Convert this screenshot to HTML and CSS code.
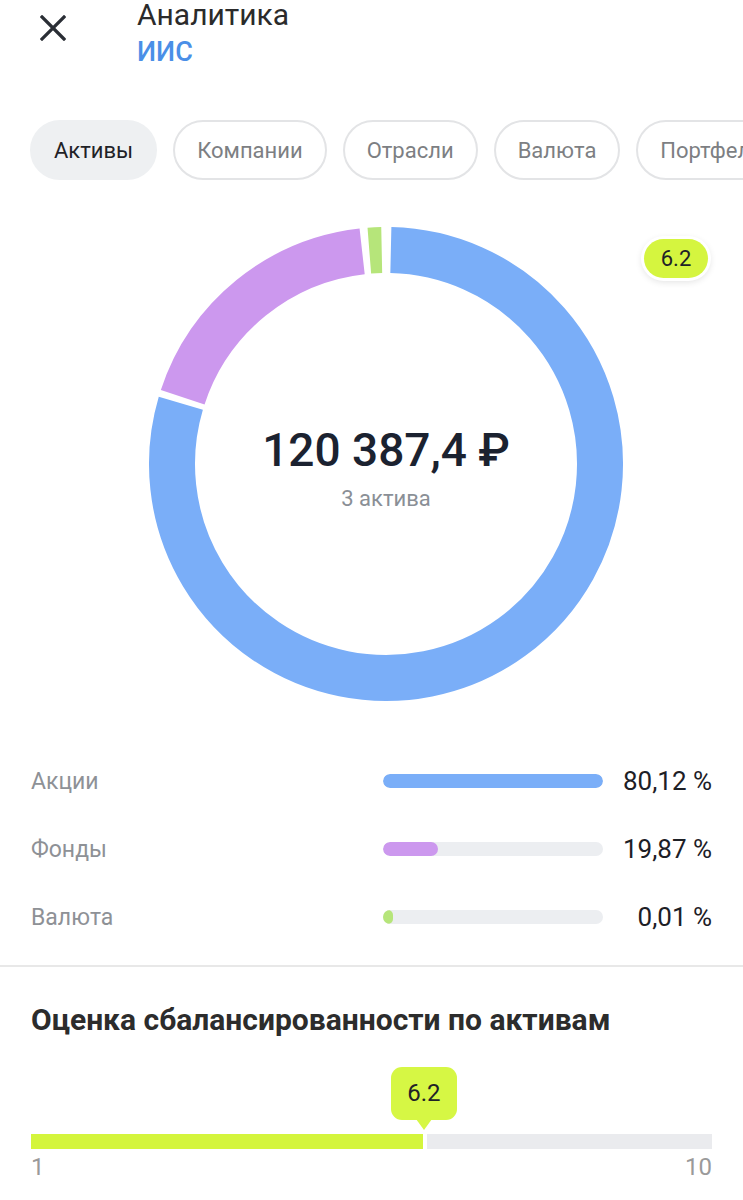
FILE: index.html
```html
<!DOCTYPE html>
<html lang="ru">

<head>
    <meta charset="UTF-8">
    <meta name="viewport" content="width=device-width, initial-scale=1.0">
    <title>Аналитика</title>
    <link rel="stylesheet" href="styles.css">
</head>
<body>
    <div class="screen">
        <header class="top">
            <button class="close" aria-label="Закрыть">
                <svg width="26" height="26" viewBox="0 0 26 26">
                    <path d="M2 2 L24 24 M24 2 L2 24" stroke="#2a2e35" stroke-width="3.2" stroke-linecap="square" fill="none"/>
                </svg>
            </button>
            <div class="title-block">
                <div class="title">Аналитика</div>
                <div class="subtitle">ИИС</div>
            </div>
        </header>

        <nav class="tabs">
            <span class="chip active">Активы</span>
            <span class="chip">Компании</span>
            <span class="chip">Отрасли</span>
            <span class="chip">Валюта</span>
            <span class="chip">Портфели</span>
        </nav>

        <section class="chart">
            <div class="donut">
                <svg width="480" height="480" viewBox="0 0 480 480">
                    <!-- Акции 80,12 % -->
                    <path d="M 244.86 26.06 A 214 214 0 1 1 34.82 179.22" stroke="#7aaef8" stroke-width="46" fill="none"/>
                    <!-- Фонды 19,87 % -->
                    <path d="M 36.7 173.2 A 214 214 0 0 1 216.14 27.33" stroke="#cc98ee" stroke-width="46" fill="none"/>
                    <!-- Валюта 0,01 % -->
                    <path d="M 223.32 26.65 A 214 214 0 0 1 235.71 26.04" stroke="#b6e57a" stroke-width="46" fill="none"/>
                </svg>
                <div class="donut-center">
                    <div class="amount">120 387,4 ₽</div>
                    <div class="count">3 актива</div>
                </div>
            </div>
            <span class="score-badge">6.2</span>
        </section>

        <ul class="legend">
            <li class="row">
                <span class="label">Акции</span>
                <span class="bar"><span class="fill blue" style="width: 100%"></span></span>
                <span class="value">80,12 %</span>
            </li>
            <li class="row">
                <span class="label">Фонды</span>
                <span class="bar"><span class="fill purple" style="width: 24.8%"></span></span>
                <span class="value">19,87 %</span>
            </li>
            <li class="row">
                <span class="label">Валюта</span>
                <span class="bar"><span class="fill green" style="width: 4.5%"></span></span>
                <span class="value">0,01 %</span>
            </li>
        </ul>

        <div class="divider"></div>

        <section class="balance">
            <h2>Оценка сбалансированности по активам</h2>
            <div class="scale">
                <div class="scale-tip" style="left: 57.7%">6.2</div>
                <div class="scale-bar">
                    <div class="scale-fill" style="flex-basis: 57.5%"></div>
                    <div class="scale-rest"></div>
                </div>
                <div class="scale-labels">
                    <span>1</span>
                    <span>10</span>
                </div>
            </div>
        </section>
    </div>
</body>

</html>
```

FILE: styles.css
```css
body {
    margin: 0;
    font-family: Roboto, "Noto Sans", Arial, sans-serif;
    background-color: #fff;
    color: #1d2026;
}

.screen {
    width: 743px;
    height: 1200px;
    overflow: hidden;
}

/* header */
.top {
    display: flex;
    align-items: flex-start;
}

.close {
    margin: 15px 71px 0 40px;
    padding: 0;
    width: 26px;
    height: 26px;
    border: none;
    background: none;
    display: block;
}

.close svg {
    display: block;
}

.title {
    font-size: 30px;
    line-height: 30px;
    color: #2b2b2b;
}

.subtitle {
    font-size: 27px;
    line-height: 44px;
    font-weight: 500;
    color: #4a8fe7;
}

/* chips */
.tabs {
    display: flex;
    gap: 16px;
    margin-top: 46px;
    padding-left: 30px;
    overflow: hidden;
    white-space: nowrap;
}

.chip {
    flex: none;
    box-sizing: border-box;
    height: 60px;
    display: flex;
    align-items: center;
    padding: 0 22px;
    font-size: 22px;
    color: #7d7f83;
    border: 2px solid #e3e4e6;
    border-radius: 30px;
    background-color: #fff;
}

.chip.active {
    color: #1f2227;
    background-color: #eef0f2;
    border-color: #eef0f2;
}

/* donut */
.chart {
    position: relative;
    padding-top: 44px;
}

.donut {
    position: relative;
    width: 480px;
    height: 480px;
    margin-left: 146px;
}

.donut svg {
    display: block;
}

.donut-center {
    position: absolute;
    inset: 0;
    display: flex;
    flex-direction: column;
    align-items: center;
    justify-content: center;
    padding-top: 7px;
    box-sizing: border-box;
}

.amount {
    font-size: 46px;
    line-height: 56px;
    font-weight: 500;
    color: #1b2230;
}

.count {
    margin-top: 7px;
    font-size: 22px;
    line-height: 28px;
    color: #8a8f96;
}

.score-badge {
    position: absolute;
    top: 59px;
    left: 644px;
    width: 64px;
    height: 39px;
    line-height: 39px;
    text-align: center;
    font-size: 22px;
    color: #1f2227;
    background-color: #d5f53f;
    border-radius: 20px;
    box-shadow: 0 0 0 3px #fff, 0 2px 7px 2px rgba(0, 0, 0, 0.12);
}

/* legend */
.legend {
    list-style: none;
    margin: 43px 0 0;
    padding: 0 31px;
}

.row {
    height: 68px;
    display: flex;
    align-items: center;
}

.label {
    flex: 1;
    font-size: 23px;
    color: #8e9196;
}

.bar {
    width: 220px;
    height: 14px;
    border-radius: 7px;
    background-color: #eceef1;
    overflow: hidden;
    display: block;
}

.fill {
    display: block;
    height: 100%;
    border-radius: 7px;
}

.fill.blue { background-color: #7aaef8; }
.fill.purple { background-color: #cc98ee; }
.fill.green { background-color: #b6e57a; }

.value {
    width: 109px;
    text-align: right;
    font-size: 26px;
    color: #1d2026;
}

.divider {
    margin-top: 14px;
    height: 2px;
    background-color: #e8e8e8;
}

/* balance score */
.balance {
    padding: 0 31px;
}

.balance h2 {
    margin: 36px 0 0;
    font-size: 30px;
    line-height: 34px;
    font-weight: 700;
    color: #2c2c2c;
}

.scale {
    position: relative;
    padding-top: 97px;
}

.scale-tip {
    position: absolute;
    top: 30px;
    transform: translateX(-50%);
    width: 66px;
    height: 53px;
    line-height: 53px;
    text-align: center;
    font-size: 24px;
    color: #1f2227;
    background-color: #d6f744;
    border-radius: 11px;
}

.scale-tip::after {
    content: "";
    position: absolute;
    left: 50%;
    bottom: -10px;
    margin-left: -8px;
    border-left: 8px solid transparent;
    border-right: 8px solid transparent;
    border-top: 11px solid #d6f744;
}

.scale-bar {
    display: flex;
    gap: 4px;
    height: 15px;
}

.scale-fill {
    flex: none;
    background-color: #d4f53c;
}

.scale-rest {
    flex: 1;
    background-color: #eaebee;
}

.scale-labels {
    display: flex;
    justify-content: space-between;
    margin-top: 4px;
    font-size: 24px;
    line-height: 28px;
    color: #9a9a9a;
}
```
